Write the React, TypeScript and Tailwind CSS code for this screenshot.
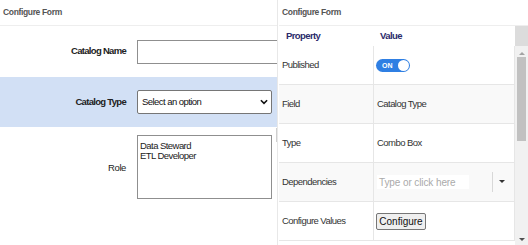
import React from "react";

function Row({ label, value, gray }: { label: string; value: React.ReactNode; gray?: boolean }) {
  return (
    <div className={`flex h-[39px] border-b border-r border-[#e6e6e6] ${gray ? "bg-[#f9f9f9]" : "bg-white"}`}>
      <div className="w-[94px] shrink-0 pl-[3px] flex items-center text-[9.5px] tracking-[-0.55px] text-[#333]">{label}</div>
      <div className="flex-1 border-l border-[#e6e6e6] flex items-center text-[9.5px] tracking-[-0.55px] text-[#333]">{value}</div>
    </div>
  );
}

export default function App() {
  return (
    <div className="w-[528px] h-[245px] overflow-hidden flex bg-white" style={{ fontFamily: '"Liberation Sans", Arial, sans-serif' }}>
      {/* Left panel */}
      <div className="w-[277px] shrink-0 flex flex-col overflow-hidden relative">
        <div className="h-[26px] shrink-0 border-b border-[#eeeeee] flex items-center pl-[3px] text-[8.5px] font-bold tracking-[-0.35px] text-[#555]">Configure Form</div>
        <div className="h-[51px] shrink-0 flex items-center">
          <div className="w-[126px] shrink-0 text-right text-[9.5px] font-bold tracking-[-0.7px] text-[#222]">Catalog Name</div>
          <div className="ml-[11px] w-[150px] h-[24px] border border-[#8f8f8f] shrink-0 bg-white"></div>
        </div>
        <div className="h-[50px] shrink-0 flex items-center bg-[#d2e0f5]">
          <div className="w-[126px] shrink-0 text-right text-[9.5px] font-bold tracking-[-0.7px] text-[#222]">Catalog Type</div>
          <div className="ml-[11px] w-[135px] shrink-0 h-[24px] border border-[#767676] rounded-[2px] bg-white flex items-center justify-between pl-[4px] pr-[3px] text-[9.5px] tracking-[-0.55px] text-[#111]">
            <span>Select an option</span>
            <svg width="8" height="6" viewBox="0 0 9 6"><path d="M1 1 L4.5 4.5 L8 1" stroke="#111" strokeWidth="1.8" fill="none" /></svg>
          </div>
        </div>
        <div className="flex pt-[8px]">
          <div className="w-[126px] shrink-0 text-right text-[9.5px] tracking-[-0.4px] text-[#222] pt-[26px]">Role</div>
          <div className="ml-[11px] w-[135px] shrink-0 h-[64px] border border-[#8f8f8f] bg-white px-[2px] pt-[5px] text-[9.5px] tracking-[-0.55px] leading-[10px] text-[#222]">
            <div>Data Steward</div>
            <div>ETL Developer</div>
          </div>
        </div>
        <div className="absolute right-0 top-[128px] w-[1px] h-[14px] bg-[#cfcfcf]"></div>
      </div>
      {/* Right panel */}
      <div className="flex-1 flex flex-col border-l border-[#e8e8e8] pl-[1px]">
        <div className="h-[26px] shrink-0 border-b border-[#eeeeee] flex items-center pl-[3px] text-[8.5px] font-bold tracking-[-0.35px] text-[#555]">Configure Form</div>
        <div className="flex flex-1">
          <div className="flex-1 flex flex-col">
            <div className="h-[20px] shrink-0 flex items-center text-[9.5px] font-bold tracking-[-0.6px] text-[#2b2b6b]">
              <div className="w-[94px] pl-[7px]">Property</div>
              <div className="pl-[7px]">Value</div>
            </div>
            <Row
              label="Published"
              value={
                <div className="ml-[2px] w-[34px] h-[13px] rounded-full bg-[#2f7fe3] flex items-center justify-between pl-[6px] pr-[1px]">
                  <span className="text-[7px] font-bold text-white leading-none tracking-normal">ON</span>
                  <span className="w-[11px] h-[11px] rounded-full bg-white"></span>
                </div>
              }
            />
            <Row label="Field" value={<span className="pl-[3px]">Catalog Type</span>} gray />
            <Row label="Type" value={<span className="pl-[3px]">Combo Box</span>} />
            <Row
              label="Dependencies"
              gray
              value={
                <div className="flex items-center w-full">
                  <div className="ml-[3px] w-[92px] h-[14px] bg-white flex items-center pl-[2px] text-[10px] tracking-[-0.1px] text-[#aaa]">Type or click here</div>
                  <div className="ml-[23px] w-[1px] h-[20px] bg-[#d8d8d8]"></div>
                  <svg className="ml-[6px]" width="6" height="4" viewBox="0 0 6 4"><path d="M0 0 L6 0 L3 3 Z" fill="#333" /></svg>
                </div>
              }
            />
            <Row
              label="Configure Values"
              value={
                <div className="ml-[2px] h-[17px] w-[50px] justify-center border border-[#767676] rounded-[2px] bg-[#efefef] flex items-center text-[10px] tracking-normal text-[#111]">Configure</div>
              }
            />
          </div>
          {/* Scrollbar */}
          <div className="w-[13px] flex flex-col">
            <div className="h-[20px] bg-[#dcdcdc]"></div>
            <div className="flex-1 bg-[#f1f1f1] flex flex-col items-center">
              <svg className="mt-[5px]" width="6" height="4" viewBox="0 0 6 4"><path d="M0 4 L6 4 L3 1 Z" fill="#a3a3a3" /></svg>
              <div className="mt-[2px] w-[9px] h-[84px] bg-[#c1c1c1]"></div>
              <div className="flex-1"></div>
              <svg className="mb-[3px]" width="6" height="4" viewBox="0 0 6 4"><path d="M0 0 L6 0 L3 3 Z" fill="#505050" /></svg>
            </div>
          </div>
        </div>
      </div>
    </div>
  );
}
